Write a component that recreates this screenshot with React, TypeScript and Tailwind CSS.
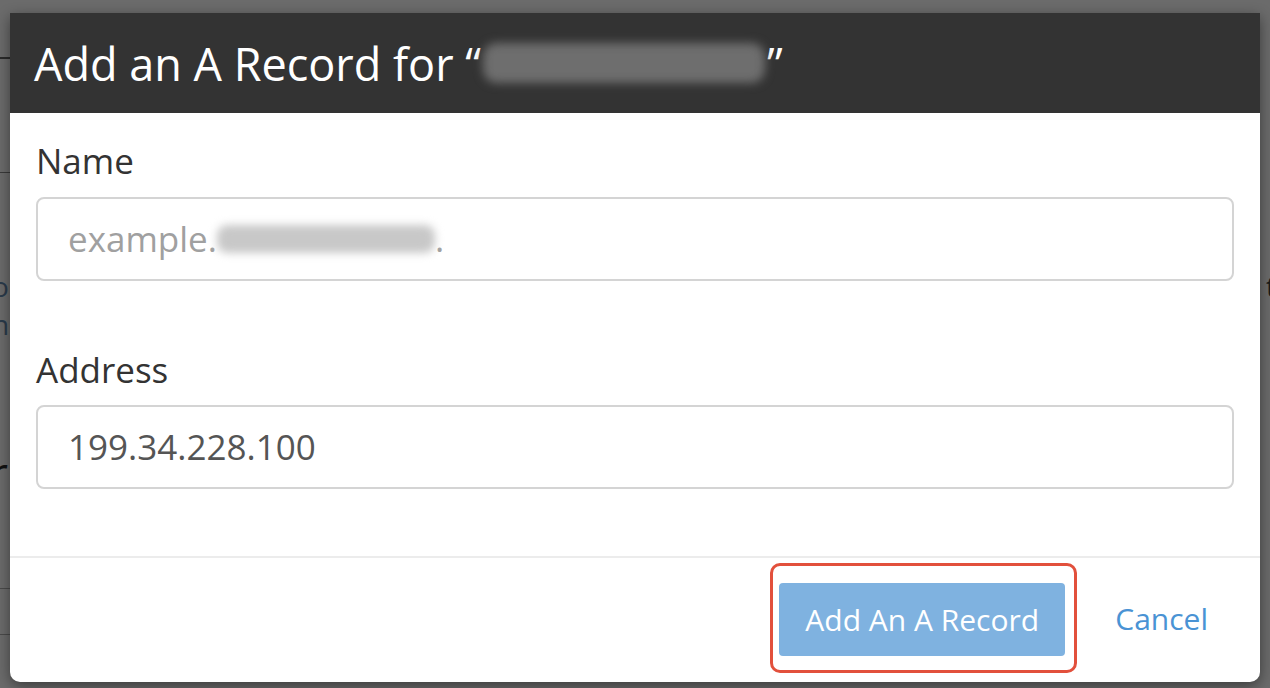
import React from "react";

const font = { fontFamily: '"Open Sans", "Noto Sans", sans-serif' };

export default function App() {
  return (
    <div className="relative w-[1270px] h-[688px] overflow-hidden bg-[#6b6b6b]" style={font}>
      {/* faint page behind the overlay */}
      <div className="absolute inset-0">
        <div className="absolute left-0 top-[57px] w-[12px] h-[2px] bg-[#2a2a2a]" />
        <div className="absolute left-0 top-[172px] w-[12px] h-[1px] bg-[#3a3a3a]" />
        <div className="absolute left-[-8px] top-[272px] text-[28px] leading-none text-[#2a3a4a]">o</div>
        <div className="absolute left-[-8px] top-[310px] text-[28px] leading-none text-[#2a3a4a]">n</div>
        <div className="absolute left-[-10px] top-[450px] text-[44px] leading-none text-[#111]">r</div>
        <div className="absolute left-0 top-[588px] w-[12px] h-[1px] bg-[#4a4a4a]" />
        <div className="absolute left-0 top-[634px] w-[12px] h-[1px] bg-[#4a4a4a]" />
        <div className="absolute right-[-6px] top-[272px] text-[28px] leading-none text-[#1a1a1a]">t</div>
      </div>

      {/* modal */}
      <div className="absolute left-[10px] top-[13px] w-[1250px] h-[669px] flex flex-col bg-white rounded-b-[10px] shadow-[0_4px_14px_rgba(0,0,0,0.45)] overflow-hidden">
        <div className="h-[100px] shrink-0 bg-[#333333] flex items-center px-[24px]">
          <h1 className="text-[45px] leading-none text-white font-normal flex items-center">
            <span>Add an A Record for “</span>
            <span className="inline-block w-[282px] h-[40px] mx-[2px] rounded-[14px] bg-[#6e6e6e] blur-[5px]" />
            <span>”</span>
          </h1>
        </div>

        <div className="flex-1 px-[26px] pt-[30px]">
          <label className="block text-[35px] leading-none font-medium text-[#333] mb-[19px]">Name</label>
          <div className="h-[84px] rounded-[8px] border-2 border-[#d4d4d4] flex items-center px-[30px] text-[35px] text-[#a0a0a0]">
            <span>example.</span>
            <span className="inline-block w-[218px] h-[28px] rounded-[10px] bg-[#c8c8c8] blur-[4px]" />
            <span>.</span>
          </div>

          <label className="block mt-[71px] text-[35px] leading-none font-medium text-[#333] mb-[18px]">Address</label>
          <div className="h-[84px] rounded-[8px] border-2 border-[#d4d4d4] flex items-center px-[30px] text-[35px] text-[#555]">
            199.34.228.100
          </div>
        </div>

        <div className="h-[126px] shrink-0 border-t-2 border-[#ececec] flex items-center justify-end pr-[52px] pb-[4px] gap-[38px]">
          <div className="rounded-[10px] border-[3px] border-[#e2503c] pt-[17px] pb-[14px] pl-[6px] pr-[9px]">
            <button className="w-[286px] h-[73px] rounded-[4px] bg-[#7fb2e0] text-white text-[30px] flex items-center justify-center">
              Add An A Record
            </button>
          </div>
          <span className="text-[30px] text-[#4a93d4]">Cancel</span>
        </div>
      </div>
    </div>
  );
}
